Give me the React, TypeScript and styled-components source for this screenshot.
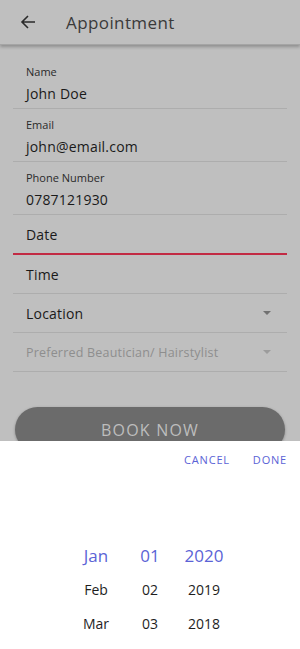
import * as React from 'react';
import styled, { createGlobalStyle } from 'styled-components';

const GlobalStyle = createGlobalStyle`
	html, body {
		margin: 0;
		padding: 0;
		background: #bfbfbf;
		font-family: "Open Sans", "Liberation Sans", sans-serif;
	}
`;

const Page = styled.div`
	width: 300px;
	height: 649px;
	overflow: hidden;
	position: relative;
	background: #bfbfbf;
`;

const Header = styled.div`
	height: 44px;
	display: flex;
	align-items: center;
	padding: 0 0 0 20px;
	background: #bfbfbf;
	box-shadow: 0 2px 3px rgba(0, 0, 0, 0.25);
	border-bottom: 1px solid #a5a5a5;
`;

const BackButton = styled.div`
	width: 16px;
	height: 16px;
	display: flex;
	align-items: center;
	margin-right: 30px;
`;

const Title = styled.div`
	font-size: 17px;
	color: #3a3a3a;
	letter-spacing: 0.4px;
`;

const Form = styled.div`
	display: flex;
	flex-direction: column;
	padding: 11px 13px 0 13px;
`;

const Field = styled.div`
	display: flex;
	flex-direction: column;
	padding: 8px 13px 4px 13px;
	border-bottom: 1px solid #adadad;
`;

const Label = styled.div`
	font-size: 11px;
	color: #2a2a2a;
	line-height: 16px;
`;

const Value = styled.div`
	font-size: 14px;
	color: #1a1a1a;
	line-height: 20px;
	padding-top: 4px;
	letter-spacing: 0.2px;
`;

const SelectRow = styled.div<{ $active?: boolean; $muted?: boolean }>`
	display: flex;
	align-items: center;
	justify-content: space-between;
	height: 38px;
	padding: 0 16px 0 13px;
	font-size: ${p => (p.$muted ? '12.5px' : '14px')};
	letter-spacing: 0.2px;
	color: ${p => (p.$muted ? '#8e8e8e' : '#1a1a1a')};
	border-bottom: ${p => (p.$active ? '2px solid #c22a43' : '1px solid #adadad')};
`;

const Caret = styled.div<{ $muted?: boolean }>`
	width: 0;
	height: 0;
	border-left: 4px solid transparent;
	border-right: 4px solid transparent;
	border-top: 4px solid ${p => (p.$muted ? '#9c9c9c' : '#717171')};
`;

const BookButton = styled.div`
	margin: 35px 15px 0 15px;
	height: 45px;
	border-radius: 23px;
	background: #6b6b6b;
	box-shadow: 0 1px 3px rgba(0, 0, 0, 0.3);
	display: flex;
	align-items: center;
	justify-content: center;
	color: #bdbdbd;
	font-size: 16px;
	letter-spacing: 1.2px;
`;

const Sheet = styled.div`
	position: absolute;
	left: 0;
	right: 0;
	top: 441px;
	bottom: 0;
	background: #ffffff;
	display: flex;
	flex-direction: column;
`;

const SheetBar = styled.div`
	height: 36px;
	display: flex;
	justify-content: flex-end;
	align-items: center;
	gap: 23px;
	padding-right: 13px;
`;

const SheetAction = styled.div`
	font-size: 11px;
	letter-spacing: 0.8px;
	color: #5b63d6;
`;

const Wheel = styled.div`
	display: flex;
	justify-content: center;
	padding-top: 61px;
`;

const WheelColumn = styled.div`
	width: 54px;
	display: flex;
	flex-direction: column;
	align-items: center;
`;

const WheelItem = styled.div<{ $selected?: boolean }>`
	height: 34px;
	display: flex;
	align-items: center;
	justify-content: center;
	font-size: ${p => (p.$selected ? '17px' : '14px')};
	color: ${p => (p.$selected ? '#5b63d6' : '#1e1e1e')};
`;

const fields = [
	{ label: 'Name', value: 'John Doe' },
	{ label: 'Email', value: 'john@email.com' },
	{ label: 'Phone Number', value: '0787121930' },
];

const columns = [
	['Jan', 'Feb', 'Mar'],
	['01', '02', '03'],
	['2020', '2019', '2018'],
];

export default function App() {
	return (
		<Page>
			<GlobalStyle />
			<Header>
				<BackButton>
					<svg width="16" height="16" viewBox="0 0 16 16" fill="none" stroke="#2b2b2b" strokeWidth="1.6">
						<path d="M15 8H2M8 2L2 8l6 6" />
					</svg>
				</BackButton>
				<Title>Appointment</Title>
			</Header>
			<Form>
				{fields.map(f =>
					<Field key={f.label}>
						<Label>{f.label}</Label>
						<Value>{f.value}</Value>
					</Field>
				)}
				<SelectRow $active>Date</SelectRow>
				<SelectRow>Time</SelectRow>
				<SelectRow>
					Location
					<Caret />
				</SelectRow>
				<SelectRow $muted>
					Preferred Beautician/ Hairstylist
					<Caret $muted />
				</SelectRow>
			</Form>
			<BookButton>BOOK NOW</BookButton>
			<Sheet>
				<SheetBar>
					<SheetAction>CANCEL</SheetAction>
					<SheetAction>DONE</SheetAction>
				</SheetBar>
				<Wheel>
					{columns.map((col, ci) =>
						<WheelColumn key={ci}>
							{col.map((item, i) =>
								<WheelItem key={item} $selected={i === 0}>{item}</WheelItem>
							)}
						</WheelColumn>
					)}
				</Wheel>
			</Sheet>
		</Page>
	);
}
